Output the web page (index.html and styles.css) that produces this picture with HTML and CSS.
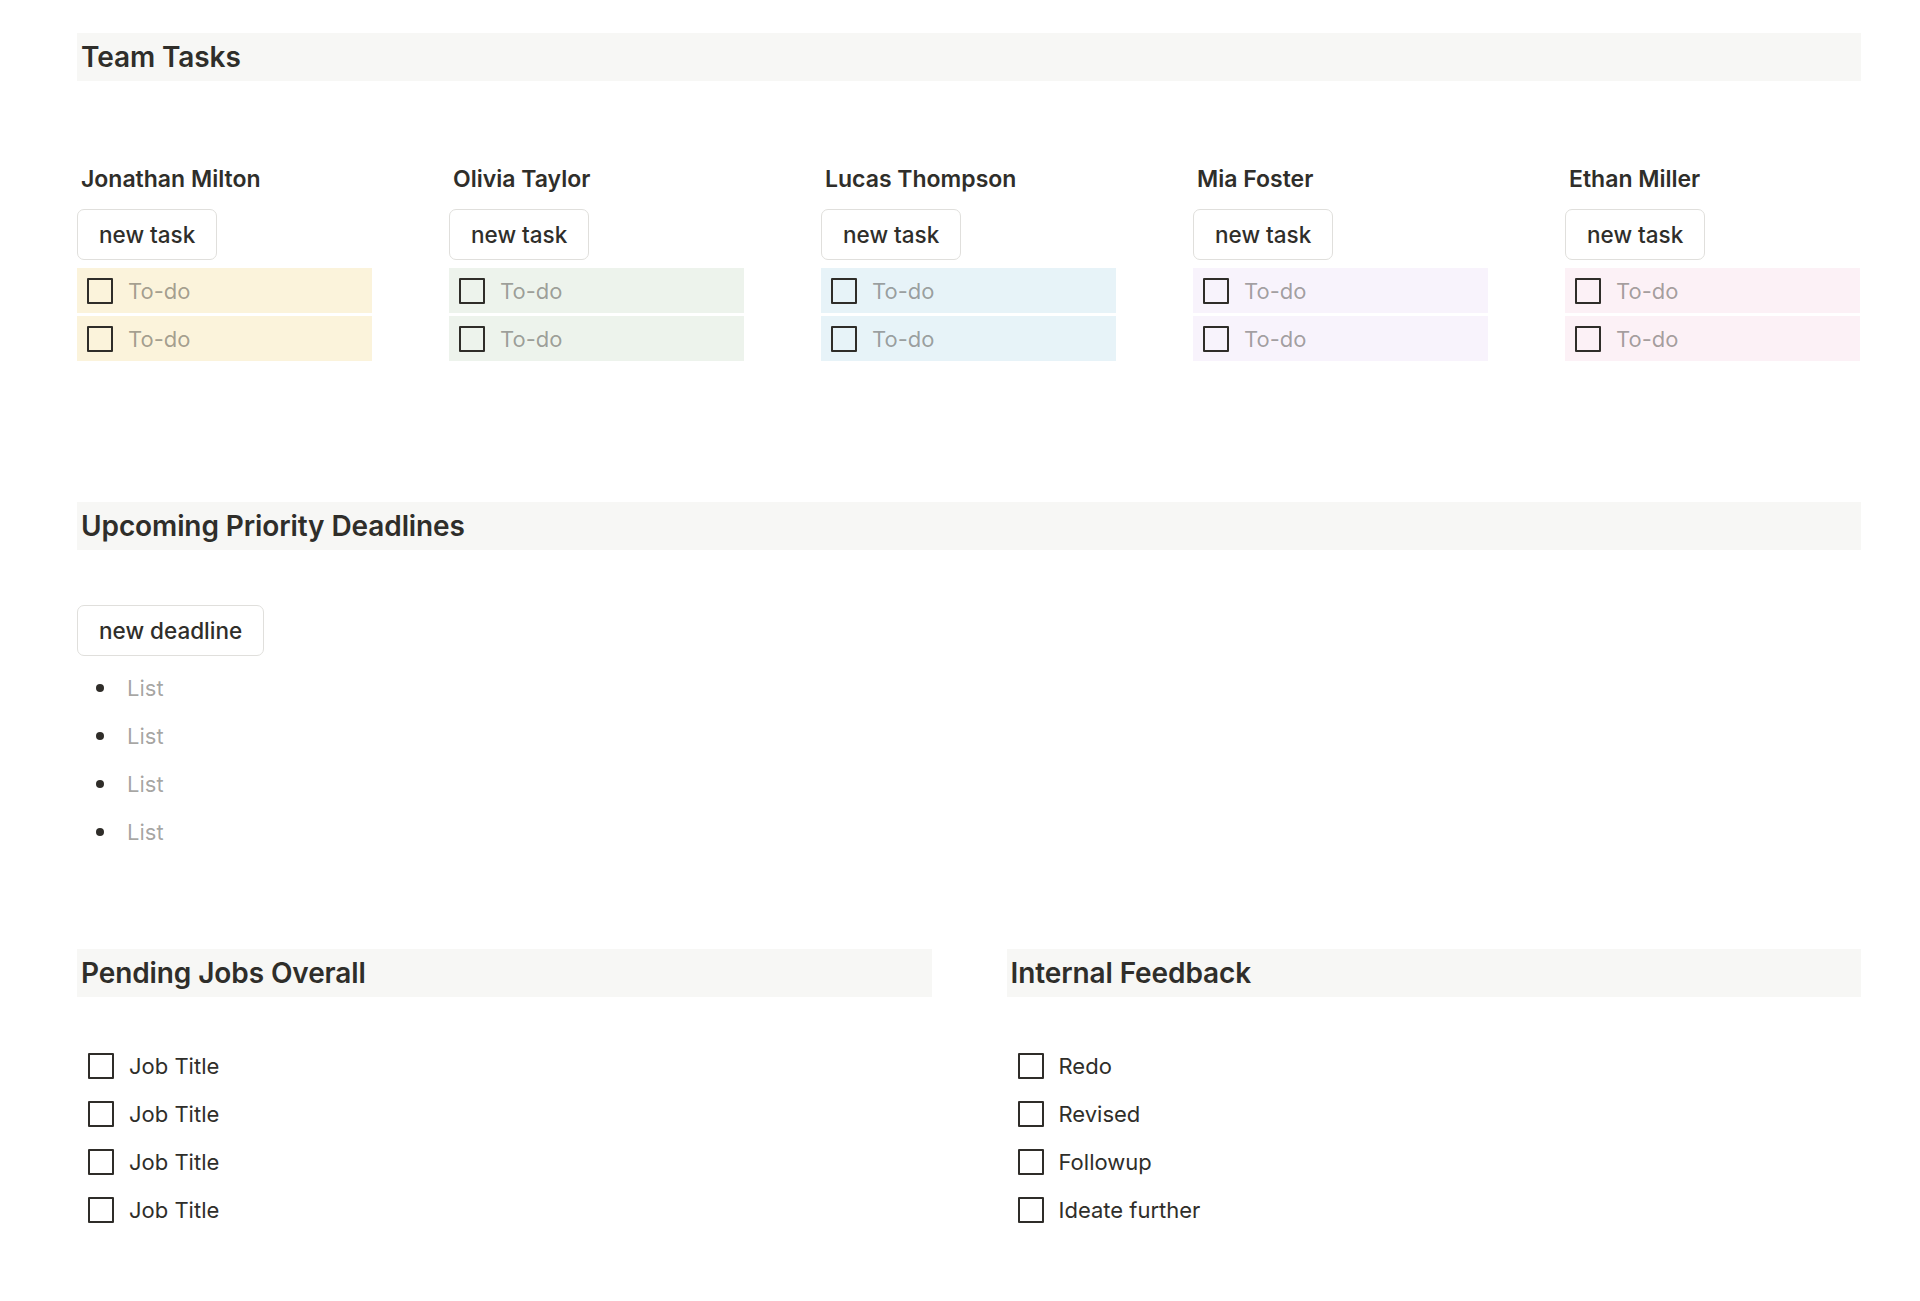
FILE: index.html
```html
<!DOCTYPE html>
<html lang="en">
<head>
  <meta charset="UTF-8">
  <meta name="viewport" content="width=device-width, initial-scale=1.0">
  <title>Team Dashboard</title>
  <link rel="stylesheet" href="styles.css">
</head>
<body>

  <main class="page">

    <!-- Team Tasks -->
    <h2 class="section-title">Team Tasks</h2>

    <div class="team-grid">
      <div class="member">
        <h3>Jonathan Milton</h3>
        <button class="add-btn">new task</button>
        <div class="todo yellow"><span class="box"></span><span class="placeholder">To-do</span></div>
        <div class="todo yellow"><span class="box"></span><span class="placeholder">To-do</span></div>
      </div>
      <div class="member">
        <h3>Olivia Taylor</h3>
        <button class="add-btn">new task</button>
        <div class="todo green"><span class="box"></span><span class="placeholder">To-do</span></div>
        <div class="todo green"><span class="box"></span><span class="placeholder">To-do</span></div>
      </div>
      <div class="member">
        <h3>Lucas Thompson</h3>
        <button class="add-btn">new task</button>
        <div class="todo blue"><span class="box"></span><span class="placeholder">To-do</span></div>
        <div class="todo blue"><span class="box"></span><span class="placeholder">To-do</span></div>
      </div>
      <div class="member">
        <h3>Mia Foster</h3>
        <button class="add-btn">new task</button>
        <div class="todo purple"><span class="box"></span><span class="placeholder">To-do</span></div>
        <div class="todo purple"><span class="box"></span><span class="placeholder">To-do</span></div>
      </div>
      <div class="member">
        <h3>Ethan Miller</h3>
        <button class="add-btn">new task</button>
        <div class="todo pink"><span class="box"></span><span class="placeholder">To-do</span></div>
        <div class="todo pink"><span class="box"></span><span class="placeholder">To-do</span></div>
      </div>
    </div>

    <!-- Deadlines -->
    <h2 class="section-title deadlines-title">Upcoming Priority Deadlines</h2>
    <button class="add-btn deadline-btn">new deadline</button>
    <ul class="bullets">
      <li>List</li>
      <li>List</li>
      <li>List</li>
      <li>List</li>
    </ul>

    <!-- Bottom two columns -->
    <div class="split">
      <section>
        <h2 class="section-title">Pending Jobs Overall</h2>
        <div class="checklist">
          <div class="check-row"><span class="box"></span>Job Title</div>
          <div class="check-row"><span class="box"></span>Job Title</div>
          <div class="check-row"><span class="box"></span>Job Title</div>
          <div class="check-row"><span class="box"></span>Job Title</div>
        </div>
      </section>
      <section>
        <h2 class="section-title">Internal Feedback</h2>
        <div class="checklist">
          <div class="check-row"><span class="box"></span>Redo</div>
          <div class="check-row"><span class="box"></span>Revised</div>
          <div class="check-row"><span class="box"></span>Followup</div>
          <div class="check-row"><span class="box"></span>Ideate further</div>
        </div>
      </section>
    </div>

  </main>

</body>
</html>
```

FILE: styles.css
```css
/* Base */
body {
  margin: 0;
  font-family: Inter, "Noto Sans", sans-serif;
  color: #2f2e2a;
  background-color: #fff;
}

.page {
  width: 1784px;
  padding: 33px 0 0 77px;
}

/* Grey heading bands */
.section-title {
  margin: 0;
  height: 48px;
  padding: 0 4px;
  background-color: #f7f7f5;
  font-size: 28px;
  font-weight: 600;
  line-height: 48px;
  letter-spacing: -0.1px;
}

/* Team columns */
.team-grid {
  display: grid;
  grid-template-columns: repeat(5, 295px);
  column-gap: 77px;
  margin-top: 83px;
}

.member h3 {
  margin: 0 0 15px 4px;
  font-size: 23px;
  font-weight: 600;
  line-height: 30px;
}

.add-btn {
  display: block;
  height: 51px;
  padding: 0 21px;
  border: 1px solid #e0dfdc;
  border-radius: 7px;
  background-color: #fff;
  color: #2f2e2a;
  font-family: inherit;
  font-size: 22.5px;
  font-weight: 500;
  line-height: 49px;
  margin-bottom: 8px;
}

.todo {
  display: flex;
  align-items: center;
  height: 45px;
  padding-left: 10px;
  font-size: 22px;
}

.todo + .todo {
  margin-top: 3px;
}

.box {
  flex: none;
  box-sizing: border-box;
  width: 26px;
  height: 26px;
  border: 2px solid #2f2d29;
  border-radius: 1px;
  margin-right: 15px;
}

.placeholder {
  color: rgba(55, 53, 47, 0.45);
}

.yellow { background-color: #fbf3db; }
.green  { background-color: #edf3ec; }
.blue   { background-color: #e7f3f8; }
.purple { background-color: #f8f3fc; }
.pink   { background-color: #fcf1f6; }

/* Deadlines */
.deadlines-title {
  margin-top: 141px;
}

.deadline-btn {
  margin-top: 55px;
  margin-bottom: 8px;
}

.bullets {
  list-style: none;
  margin: 0;
  padding: 0;
}

.bullets li {
  display: flex;
  align-items: center;
  height: 48px;
  padding-left: 19px;
  font-size: 22px;
  color: rgba(55, 53, 47, 0.45);
}

.bullets li::before {
  content: "";
  width: 8px;
  height: 8px;
  border-radius: 50%;
  background-color: #2f2d29;
  margin-right: 23px;
}

/* Bottom split */
.split {
  display: grid;
  grid-template-columns: 1fr 1fr;
  column-gap: 75px;
  margin-top: 93px;
}

.checklist {
  margin-top: 45px;
}

.check-row {
  display: flex;
  align-items: center;
  height: 48px;
  padding-left: 11px;
  font-size: 22px;
}
```
